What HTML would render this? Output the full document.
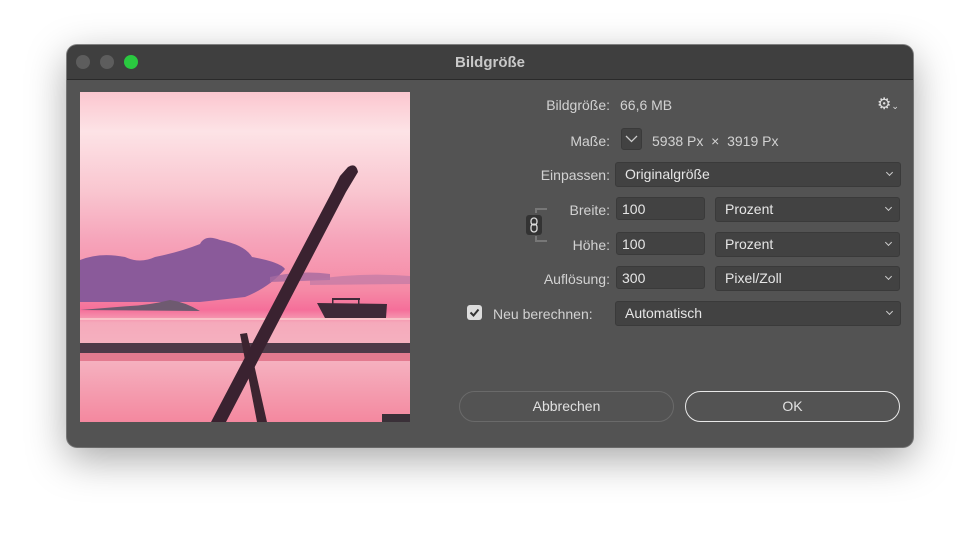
<!DOCTYPE html>
<html><head><style>
*{margin:0;padding:0;box-sizing:border-box}
body{width:980px;height:536px;background:#fff;position:relative;overflow:hidden;font-family:"Liberation Sans",Arial,sans-serif}
.win{position:absolute;left:67px;top:45px;width:846px;height:402px;background:#535353;border-radius:10px;box-shadow:0 12px 40px rgba(0,0,0,.35),0 0 0 1px rgba(0,0,0,.45);overflow:hidden}
.tb{position:absolute;left:0;top:0;width:100%;height:35px;background:#3f3f3f;border-bottom:1px solid #2a2a2a}
.dot{position:absolute;top:10px;width:14px;height:14px;border-radius:50%;background:#5d5d5d}
.title{position:absolute;top:9px;left:0;width:100%;text-align:center;color:#c9c9c9;font-weight:bold;font-size:15px}
.t{position:absolute;color:#d2d2d2;font-size:14px;white-space:nowrap}
.r{text-align:right}
.box{position:absolute;background:#424242;border:1px solid #3a3a3a;border-radius:3px;color:#e6e6e6;font-size:14px;padding-left:5px;line-height:22px}
.sel{padding-left:9px}
.sel:after{content:"";position:absolute;right:8px;top:7px;width:4px;height:4px;border-right:1.3px solid #ccc;border-bottom:1.3px solid #ccc;transform:rotate(45deg)}
.btn{position:absolute;top:346px;height:31px;border-radius:16px;color:#e0e0e0;font-size:14px;text-align:center;line-height:29px}
</style></head><body>
<div class="win">
<div class="tb">
<div class="dot" style="left:9px"></div><div class="dot" style="left:33px"></div><div class="dot" style="left:57px;background:#2ac940"></div>
<div class="title">Bildgröße</div>
</div>
<svg style="position:absolute;left:13px;top:47px" width="330" height="330" viewBox="0 0 330 330">
<defs>
<linearGradient id="sky" x1="0" y1="0" x2="0" y2="1">
<stop offset="0" stop-color="#fbc6cf"/><stop offset=".12" stop-color="#fde3e6"/><stop offset=".3" stop-color="#f9c6d0"/><stop offset=".45" stop-color="#f6a4ba"/><stop offset=".6" stop-color="#f58aa6"/><stop offset=".66" stop-color="#f56f9a"/><stop offset=".7" stop-color="#f5aabb"/><stop offset=".8" stop-color="#f5b4c2"/><stop offset="1" stop-color="#f4889f"/>
</linearGradient>
</defs>
<rect width="330" height="330" fill="url(#sky)"/>
<path d="M0 200 L0 168 Q20 160 45 165 Q60 172 75 165 Q100 160 120 152 Q125 142 140 148 Q165 153 172 165 Q200 170 205 177 Q190 195 165 205 L120 210 L0 210Z" fill="#8a5a9a"/>
<path d="M190 185 Q220 178 250 182 L250 188 L190 190Z" fill="#a56aa0" opacity=".8"/>
<path d="M230 188 Q280 180 330 184 L330 192 L230 193Z" fill="#b677a5" opacity=".6"/>
<path d="M0 218 L50 214 Q70 213 90 208 Q105 210 120 219Z" fill="#6e5a70"/>
<rect x="0" y="226" width="330" height="2" fill="#f9c2c8"/>
<rect x="0" y="251" width="330" height="10" fill="#4e3a48"/>
<rect x="0" y="261" width="330" height="8" fill="#e37a8f"/>
<path d="M237 211 L307 212 L306 226 L245 226Z" fill="#3e2a38"/>
<rect x="252" y="206" width="28" height="2" fill="#3e2a38"/>
<rect x="252" y="206" width="1.5" height="7" fill="#3e2a38"/><rect x="278" y="206" width="1.5" height="7" fill="#3e2a38"/>
<path d="M160 242 L167 241 L187 330 L177 330Z" fill="#3c2430"/>
<path d="M131 330 L254 96 L260 84 L268 75 Q276 70 278 80 L272 90 L266 100 L146 330Z" fill="#3a2230"/>
<rect x="302" y="322" width="28" height="8" fill="#3a3038"/>
</svg>
<div class="t r" style="left:420px;top:52px;width:123px">Bildgröße:</div>
<div class="t" style="left:553px;top:52px">66,6 MB</div>
<div class="t" style="left:810px;top:49px;font-size:16px;color:#e0e0e0">⚙<span style="font-size:9px">⌄</span></div>
<div class="t r" style="left:420px;top:88px;width:123px">Maße:</div>
<div class="box" style="left:554px;top:83px;width:21px;height:22px;padding:0"><svg width="19" height="20"><path d="M4 7 L9.5 12.5 L15 7" fill="none" stroke="#ccc" stroke-width="1.3"/></svg></div>
<div class="t" style="left:585px;top:88px">5938 Px &nbsp;×&nbsp; 3919 Px</div>
<div class="t r" style="left:420px;top:122px;width:123px">Einpassen:</div>
<div class="box sel" style="left:548px;top:117px;width:286px;height:25px">Originalgröße</div>
<div class="t r" style="left:420px;top:157px;width:123px">Breite:</div>
<div class="box" style="left:549px;top:152px;width:89px;height:23px">100</div>
<div class="box sel" style="left:648px;top:152px;width:185px;height:25px">Prozent</div>
<div class="t r" style="left:420px;top:192px;width:123px">Höhe:</div>
<div class="box" style="left:549px;top:187px;width:89px;height:23px">100</div>
<div class="box sel" style="left:648px;top:187px;width:185px;height:25px">Prozent</div>
<div style="position:absolute;left:468px;top:163px;width:12px;height:5px;border-left:2px solid #777;border-top:2px solid #777"></div>
<div style="position:absolute;left:468px;top:191px;width:12px;height:6px;border-left:2px solid #777;border-bottom:2px solid #777"></div>
<div style="position:absolute;left:459px;top:170px;width:16px;height:20px;background:#333;border-radius:3px"><svg width="16" height="20"><rect x="5" y="3" width="6" height="7" rx="3" fill="none" stroke="#ddd" stroke-width="1.3"/><rect x="5" y="9" width="6" height="8" rx="3" fill="none" stroke="#ddd" stroke-width="1.3"/></svg></div>
<div class="t r" style="left:420px;top:226px;width:123px">Auflösung:</div>
<div class="box" style="left:549px;top:221px;width:89px;height:23px">300</div>
<div class="box sel" style="left:648px;top:221px;width:185px;height:25px">Pixel/Zoll</div>
<div style="position:absolute;left:400px;top:260px;width:15px;height:15px;background:#ddd;border-radius:3px"><svg width="15" height="15"><path d="M3.5 7.5 L6.5 10.5 L11.5 4.5" fill="none" stroke="#333" stroke-width="2"/></svg></div>
<div class="t" style="left:426px;top:261px">Neu berechnen:</div>
<div class="box sel" style="left:548px;top:256px;width:286px;height:25px">Automatisch</div>
<div class="btn" style="left:392px;width:215px;border:1px solid #6a6a6a">Abbrechen</div>
<div class="btn" style="left:618px;width:215px;border:1.5px solid #e8e8e8">OK</div>
</div>
</body></html>
